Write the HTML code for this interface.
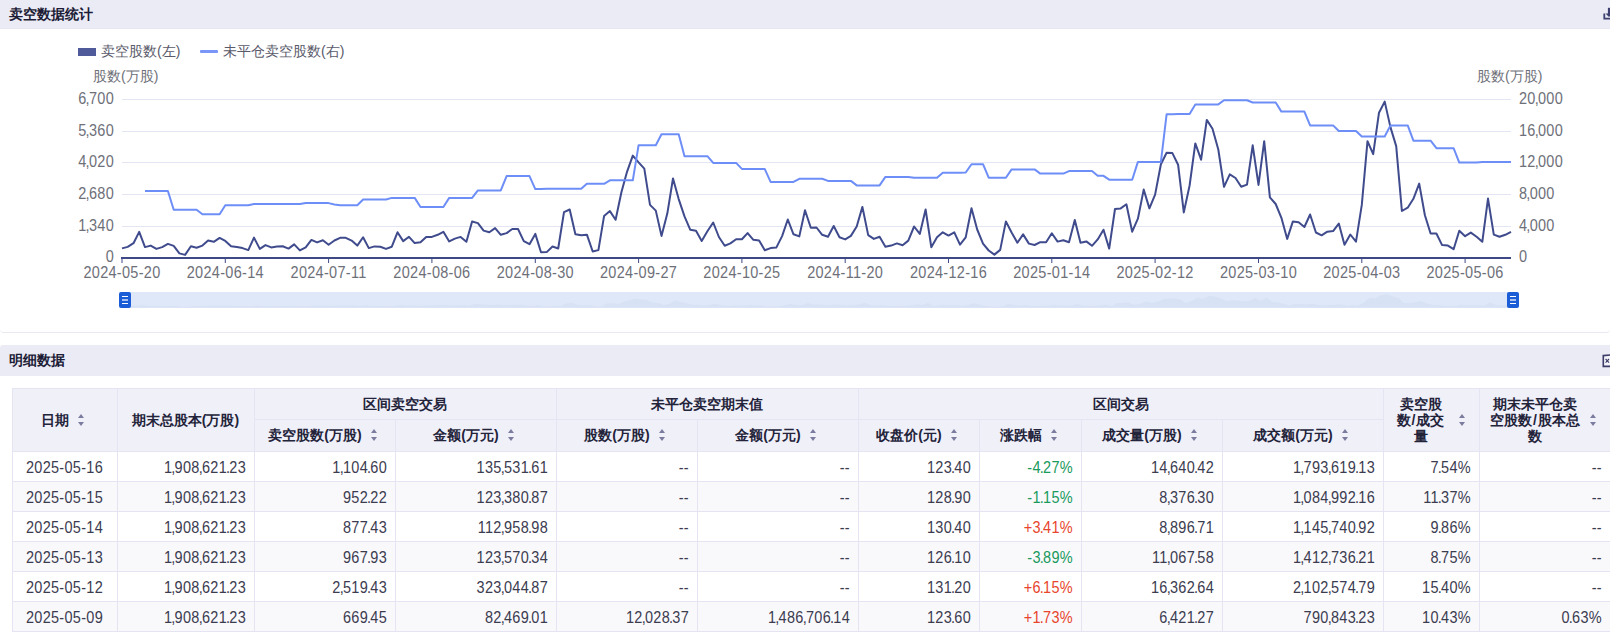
<!DOCTYPE html>
<html><head><meta charset="utf-8">
<style>
*{margin:0;padding:0;box-sizing:border-box}
html,body{width:1610px;height:632px;overflow:hidden;background:#fff;font-family:"Liberation Sans",sans-serif}
i{font-style:normal;margin:0 -1.05px}
.hdr{position:absolute;left:0;width:1610px;background:#ebebf5;color:#1c1c36;font-size:14px;font-weight:bold}
.hdr span{position:absolute;left:9px}
#h1{top:0;height:29px;border-bottom:1px solid #e7e7f3}
#h1 span{top:6px}
#h2{top:345px;height:31px;border-radius:3px 0 0 0}
#h2 span{top:7px}
#chartbox{position:absolute;left:0;top:29px;width:1610px;height:304px;border-bottom:1px solid #e8e8f2;border-radius:0 0 4px 4px}
.chart{position:absolute;left:0;top:29px}
.lg{position:absolute;font-size:14px;color:#5a5a6a;top:43px}
.xl{position:absolute;top:264px;width:100px;text-align:center;font-size:14.5px;letter-spacing:0.3px;transform:scaleY(1.1);color:#6e7079}
.yl{position:absolute;left:14px;width:100px;text-align:right;font-size:14.5px;letter-spacing:0.3px;transform:scaleY(1.1);color:#6e7079}
.yr{position:absolute;left:1519px;width:100px;text-align:left;font-size:14.5px;letter-spacing:0.3px;transform:scaleY(1.1);color:#6e7079}
.axt{position:absolute;top:68px;font-size:14px;color:#6e7079}
.hl{position:absolute;left:12px;width:1598px;height:1px;background:#e4e4f2}
.vl{position:absolute;width:1px;background:#e4e4f2}
.hc{position:absolute;display:flex;align-items:center;justify-content:center;font-size:14px;font-weight:bold;color:#23233a;line-height:16px;text-align:center}
.ml{display:inline-block;word-break:break-all}
u{text-decoration:none;margin:0 1px}
.ml+.so{margin-left:12px}
.so{display:inline-block;position:relative;width:7px;height:12px;margin-left:9px;margin-right:3px}
.so:before{content:"";position:absolute;left:0;top:0;border-left:3.5px solid transparent;border-right:3.5px solid transparent;border-bottom:4px solid #7b7b9f}
.so:after{content:"";position:absolute;left:0;top:8px;border-left:3.5px solid transparent;border-right:3.5px solid transparent;border-top:4px solid #7b7b9f}
.dc{position:absolute;height:30px;display:flex;align-items:center;justify-content:flex-end;padding:1px 8px 0;font-size:14.5px;letter-spacing:0.3px;transform:scaleY(1.1);color:#3c3c50;white-space:nowrap}
.dz{position:absolute;top:292px;height:16px}
.hb{position:absolute;left:3px;width:6px;height:1px;background:#fff}
</style></head><body>
<div id="h1" class="hdr"><span>卖空数据统计</span></div>
<svg style="position:absolute;left:1598px;top:4px" width="12" height="20" viewBox="0 0 12 20"><path d="M6.3 9.5 V14.6 H14" fill="none" stroke="#3d4070" stroke-width="1.8"/><path d="M11 3.8 V12" stroke="#3d4070" stroke-width="2.2"/><path d="M7.5 9.5 L11 13 L14.5 9.5 Z" fill="#3d4070"/></svg>
<div id="chartbox"></div>
<svg class="chart" width="1610" height="303" viewBox="0 29 1610 303">
<line x1="122" x2="1511" y1="99.5" y2="99.5" stroke="#e3e5f2" stroke-width="1"/>
<line x1="122" x2="1511" y1="131.5" y2="131.5" stroke="#e3e5f2" stroke-width="1"/>
<line x1="122" x2="1511" y1="162.5" y2="162.5" stroke="#e3e5f2" stroke-width="1"/>
<line x1="122" x2="1511" y1="194.5" y2="194.5" stroke="#e3e5f2" stroke-width="1"/>
<line x1="122" x2="1511" y1="226.5" y2="226.5" stroke="#e3e5f2" stroke-width="1"/>
<line x1="121" x2="1511" y1="258" y2="258" stroke="#3e4a85" stroke-width="2"/>
<line x1="122.0" x2="122.0" y1="258" y2="263" stroke="#3e4a85" stroke-width="1"/>
<line x1="225.3" x2="225.3" y1="258" y2="263" stroke="#3e4a85" stroke-width="1"/>
<line x1="328.6" x2="328.6" y1="258" y2="263" stroke="#3e4a85" stroke-width="1"/>
<line x1="431.9" x2="431.9" y1="258" y2="263" stroke="#3e4a85" stroke-width="1"/>
<line x1="535.3" x2="535.3" y1="258" y2="263" stroke="#3e4a85" stroke-width="1"/>
<line x1="638.6" x2="638.6" y1="258" y2="263" stroke="#3e4a85" stroke-width="1"/>
<line x1="741.9" x2="741.9" y1="258" y2="263" stroke="#3e4a85" stroke-width="1"/>
<line x1="845.2" x2="845.2" y1="258" y2="263" stroke="#3e4a85" stroke-width="1"/>
<line x1="948.5" x2="948.5" y1="258" y2="263" stroke="#3e4a85" stroke-width="1"/>
<line x1="1051.8" x2="1051.8" y1="258" y2="263" stroke="#3e4a85" stroke-width="1"/>
<line x1="1155.1" x2="1155.1" y1="258" y2="263" stroke="#3e4a85" stroke-width="1"/>
<line x1="1258.5" x2="1258.5" y1="258" y2="263" stroke="#3e4a85" stroke-width="1"/>
<line x1="1361.8" x2="1361.8" y1="258" y2="263" stroke="#3e4a85" stroke-width="1"/>
<line x1="1465.1" x2="1465.1" y1="258" y2="263" stroke="#3e4a85" stroke-width="1"/>
<path d="M122.0,248.4 L127.7,246.9 L133.5,243.2 L139.2,231.9 L145.0,247.1 L150.7,245.6 L156.4,248.9 L162.2,247.1 L167.9,243.9 L173.7,245.9 L179.4,253.4 L185.1,254.9 L190.9,246.3 L196.6,247.8 L202.4,245.6 L208.1,240.6 L213.8,241.8 L219.6,237.9 L225.3,240.9 L231.1,246.3 L236.8,246.9 L242.5,248.1 L248.3,250.1 L254.0,237.6 L259.8,248.9 L265.5,245.1 L271.2,247.4 L277.0,246.6 L282.7,246.3 L288.5,248.6 L294.2,244.4 L299.9,250.4 L305.7,247.4 L311.4,239.9 L317.1,242.4 L322.9,240.3 L328.6,244.7 L334.4,240.5 L340.1,237.8 L345.8,237.8 L351.6,240.6 L357.3,245.6 L363.1,237.3 L368.8,248.1 L374.5,246.4 L380.3,246.7 L386.0,248.9 L391.8,246.7 L397.5,232.3 L403.2,241.1 L409.0,236.8 L414.7,243.1 L420.5,242.3 L426.2,236.9 L431.9,236.9 L437.7,234.8 L443.4,231.8 L449.2,241.4 L454.9,238.6 L460.6,236.9 L466.4,241.8 L472.1,221.5 L477.9,223.1 L483.6,230.6 L489.3,232.3 L495.1,228.1 L500.8,234.8 L506.6,233.1 L512.3,229.0 L518.0,229.0 L523.8,241.1 L529.5,244.2 L535.3,233.9 L541.0,252.2 L546.7,252.1 L552.5,246.5 L558.2,248.5 L564.0,212.2 L569.7,209.5 L575.4,234.2 L581.2,235.2 L586.9,234.7 L592.7,251.5 L598.4,250.1 L604.1,215.9 L609.9,211.1 L615.6,219.8 L621.4,192.3 L627.1,171.6 L632.8,155.6 L638.6,162.4 L644.3,168.6 L650.0,204.9 L655.8,210.6 L661.5,235.9 L667.3,213.6 L673.0,178.5 L678.7,199.1 L684.5,216.4 L690.2,229.7 L696.0,230.8 L701.7,240.9 L707.4,231.3 L713.2,222.5 L718.9,237.0 L724.7,245.7 L730.4,243.4 L736.1,239.3 L741.9,239.3 L747.6,233.1 L753.4,239.8 L759.1,240.5 L764.8,250.2 L770.6,248.1 L776.3,247.6 L782.1,236.1 L787.8,219.5 L793.5,234.3 L799.3,236.4 L805.0,210.2 L810.8,227.8 L816.5,227.5 L822.2,234.8 L828.0,236.8 L833.7,226.0 L839.5,237.3 L845.2,239.4 L850.9,235.9 L856.7,226.5 L862.4,206.9 L868.2,235.1 L873.9,238.9 L879.6,236.8 L885.4,246.7 L891.1,245.6 L896.9,243.4 L902.6,245.2 L908.3,240.6 L914.1,226.5 L919.8,233.9 L925.6,209.5 L931.3,247.2 L937.0,237.3 L942.8,232.3 L948.5,235.6 L954.3,232.3 L960.0,244.7 L965.7,237.4 L971.5,208.3 L977.2,229.5 L983.0,243.6 L988.7,250.5 L994.4,254.6 L1000.2,249.9 L1005.9,221.4 L1011.6,232.5 L1017.4,242.7 L1023.1,234.4 L1028.9,243.6 L1034.6,245.0 L1040.3,242.2 L1046.1,242.2 L1051.8,233.3 L1057.6,241.6 L1063.3,240.2 L1069.0,242.2 L1074.8,220.0 L1080.5,242.7 L1086.3,241.4 L1092.0,245.8 L1097.7,239.4 L1103.5,229.7 L1109.2,248.6 L1115.0,209.0 L1120.7,208.4 L1126.4,204.3 L1132.2,231.7 L1137.9,218.7 L1143.7,189.6 L1149.4,208.4 L1155.1,194.6 L1160.9,164.2 L1166.6,152.8 L1172.4,153.1 L1178.1,164.7 L1183.8,212.4 L1189.6,185.5 L1195.3,143.4 L1201.1,159.7 L1206.8,119.9 L1212.5,128.7 L1218.3,149.5 L1224.0,186.8 L1229.8,174.4 L1235.5,178.0 L1241.2,186.8 L1247.0,184.6 L1252.7,145.3 L1258.5,184.9 L1264.2,141.2 L1269.9,197.4 L1275.7,204.0 L1281.4,217.8 L1287.2,238.9 L1292.9,221.4 L1298.6,222.3 L1304.4,227.0 L1310.1,214.5 L1315.9,232.5 L1321.6,235.3 L1327.3,231.7 L1333.1,231.1 L1338.8,223.6 L1344.5,244.7 L1350.3,234.5 L1356.0,241.7 L1361.8,204.9 L1367.5,141.2 L1373.2,154.2 L1379.0,112.7 L1384.7,101.6 L1390.5,127.4 L1396.2,146.1 L1401.9,211.0 L1407.7,207.7 L1413.4,198.8 L1419.2,183.6 L1424.9,215.2 L1430.6,233.5 L1436.4,233.5 L1442.1,245.1 L1447.9,245.6 L1453.6,249.2 L1459.3,230.7 L1465.1,236.2 L1470.8,232.6 L1476.6,236.8 L1482.3,241.8 L1488.0,198.6 L1493.8,234.6 L1499.5,236.8 L1505.3,234.8 L1511.0,231.8" fill="none" stroke="#3f4b8c" stroke-width="2" stroke-linejoin="round"/>
<path d="M145.0,191.0 L150.7,191.0 L156.4,191.0 L162.2,191.0 L167.9,191.0 L173.7,209.8 L179.4,209.8 L185.1,209.8 L190.9,209.8 L196.6,209.8 L202.4,214.3 L208.1,214.3 L213.8,214.3 L219.6,214.3 L225.3,205.3 L231.1,205.3 L236.8,205.3 L242.5,205.3 L248.3,205.3 L254.0,204.1 L259.8,204.1 L265.5,204.1 L271.2,204.1 L277.0,204.1 L282.7,204.1 L288.5,204.1 L294.2,204.1 L299.9,204.1 L305.7,203.1 L311.4,203.1 L317.1,203.1 L322.9,203.1 L328.6,203.1 L334.4,204.5 L340.1,205.2 L345.8,205.2 L351.6,205.2 L357.3,205.2 L363.1,199.5 L368.8,199.5 L374.5,199.5 L380.3,199.5 L386.0,199.5 L391.8,197.9 L397.5,197.9 L403.2,197.9 L409.0,197.9 L414.7,197.9 L420.5,207.0 L426.2,207.0 L431.9,207.0 L437.7,207.0 L443.4,207.0 L449.2,197.9 L454.9,197.9 L460.6,197.9 L466.4,197.9 L472.1,197.9 L477.9,190.4 L483.6,190.4 L489.3,190.4 L495.1,190.4 L500.8,190.4 L506.6,176.1 L512.3,176.1 L518.0,176.1 L523.8,176.1 L529.5,176.1 L535.3,189.1 L541.0,189.1 L546.7,188.8 L552.5,188.8 L558.2,188.8 L564.0,188.8 L569.7,188.8 L575.4,188.8 L581.2,188.8 L586.9,183.8 L592.7,183.8 L598.4,183.8 L604.1,183.8 L609.9,180.3 L615.6,180.3 L621.4,180.3 L627.1,180.3 L632.8,180.3 L638.6,145.2 L644.3,145.2 L650.0,145.2 L655.8,145.2 L661.5,134.2 L667.3,134.2 L673.0,134.2 L678.7,134.2 L684.5,156.2 L690.2,156.2 L696.0,156.2 L701.7,156.2 L707.4,156.2 L713.2,162.9 L718.9,162.9 L724.7,162.9 L730.4,162.9 L736.1,162.9 L741.9,168.9 L747.6,168.9 L753.4,168.9 L759.1,169.1 L764.8,169.1 L770.6,181.9 L776.3,181.9 L782.1,181.9 L787.8,181.9 L793.5,181.9 L799.3,178.8 L805.0,178.8 L810.8,178.8 L816.5,178.8 L822.2,178.8 L828.0,180.9 L833.7,180.9 L839.5,180.9 L845.2,180.9 L850.9,180.9 L856.7,185.4 L862.4,185.4 L868.2,185.4 L873.9,185.4 L879.6,185.4 L885.4,176.9 L891.1,176.9 L896.9,176.9 L902.6,176.9 L908.3,176.9 L914.1,177.8 L919.8,177.8 L925.6,177.8 L931.3,177.8 L937.0,177.8 L942.8,172.8 L948.5,172.8 L954.3,172.8 L960.0,172.8 L965.7,172.5 L971.5,164.2 L977.2,164.2 L983.0,164.2 L988.7,177.7 L994.4,177.7 L1000.2,177.7 L1005.9,177.7 L1011.6,169.4 L1017.4,169.4 L1023.1,169.4 L1028.9,169.4 L1034.6,169.4 L1040.3,173.6 L1046.1,173.6 L1051.8,173.6 L1057.6,173.6 L1063.3,173.6 L1069.0,171.1 L1074.8,171.1 L1080.5,171.1 L1086.3,171.1 L1092.0,171.1 L1097.7,175.8 L1103.5,175.8 L1109.2,179.7 L1115.0,179.7 L1120.7,179.7 L1126.4,179.7 L1132.2,179.7 L1137.9,161.9 L1143.7,161.9 L1149.4,161.9 L1155.1,161.9 L1160.9,161.9 L1166.6,114.3 L1172.4,114.3 L1178.1,114.1 L1183.8,114.1 L1189.6,114.1 L1195.3,104.4 L1201.1,104.4 L1206.8,104.4 L1212.5,104.4 L1218.3,104.4 L1224.0,100.2 L1229.8,100.2 L1235.5,100.2 L1241.2,100.2 L1247.0,100.2 L1252.7,102.5 L1258.5,102.5 L1264.2,102.5 L1269.9,102.5 L1275.7,102.5 L1281.4,111.6 L1287.2,111.6 L1292.9,111.6 L1298.6,111.6 L1304.4,111.6 L1310.1,125.4 L1315.9,125.4 L1321.6,125.4 L1327.3,125.4 L1333.1,125.4 L1338.8,131.0 L1344.5,131.0 L1350.3,131.0 L1356.0,131.0 L1361.8,136.5 L1367.5,136.5 L1373.2,136.5 L1379.0,136.5 L1384.7,136.5 L1390.5,125.4 L1396.2,125.4 L1401.9,125.4 L1407.7,125.4 L1413.4,140.7 L1419.2,140.7 L1424.9,140.7 L1430.6,140.7 L1436.4,148.2 L1442.1,148.2 L1447.9,148.2 L1453.6,148.2 L1459.3,162.6 L1465.1,162.6 L1470.8,162.6 L1476.6,162.6 L1482.3,162.0 L1488.0,162.0 L1493.8,162.0 L1499.5,162.0 L1505.3,162.0 L1511.0,162.0" fill="none" stroke="#6e8ef7" stroke-width="2" stroke-linejoin="round"/>
<rect x="130" y="292" width="1378" height="16" fill="#dfe8f8"/>
<polygon points="125,307.5 125.0,306.3 130.7,306.1 136.5,305.8 142.2,304.9 148.0,306.1 153.7,306.0 159.4,306.3 165.2,306.1 170.9,305.9 176.7,306.0 182.4,306.7 188.1,306.8 193.9,306.1 199.5,306.2 205.3,306.0 211.0,305.6 216.7,305.7 222.5,305.4 228.2,305.6 234.0,306.1 239.7,306.1 245.4,306.2 251.2,306.4 256.9,305.4 262.7,306.3 268.4,306.0 274.1,306.2 279.9,306.1 285.6,306.1 291.4,306.3 297.1,305.9 302.8,306.4 308.6,306.2 314.3,305.6 320.0,305.8 325.8,305.6 331.5,305.9 337.2,305.6 342.9,305.4 348.6,305.4 354.4,305.6 360.1,306.0 365.9,305.3 371.6,306.2 377.3,306.1 383.1,306.1 388.8,306.3 394.6,306.1 400.3,304.9 406.0,305.7 411.8,305.3 417.5,305.8 423.3,305.7 429.0,305.3 434.7,305.3 440.5,305.1 446.2,304.9 452.0,305.7 457.7,305.4 463.4,305.3 469.2,305.7 474.8,304.0 480.6,304.2 486.3,304.8 492.0,304.9 497.8,304.6 503.5,305.1 509.3,305.0 515.0,304.7 520.7,304.7 526.5,305.7 532.2,305.9 538.0,305.1 543.7,306.6 549.4,306.6 555.2,306.1 560.9,306.3 566.7,303.3 572.4,303.1 578.1,305.1 583.9,305.2 589.6,305.1 595.4,306.5 601.1,306.4 606.8,303.6 612.5,303.2 618.2,303.9 624.0,301.6 629.7,299.9 635.4,298.6 641.2,299.2 646.9,299.7 652.6,302.7 658.4,303.1 664.1,305.2 669.9,303.4 675.6,300.5 681.3,302.2 687.1,303.6 692.8,304.7 698.6,304.8 704.3,305.6 710.0,304.8 715.8,304.1 721.5,305.3 727.3,306.0 733.0,305.8 738.7,305.5 744.5,305.5 750.1,305.0 755.9,305.5 761.6,305.6 767.3,306.4 773.1,306.2 778.8,306.2 784.6,305.2 790.3,303.9 796.0,305.1 801.8,305.3 807.5,303.1 813.3,304.6 819.0,304.5 824.7,305.1 830.5,305.3 836.2,304.4 842.0,305.3 847.7,305.5 853.4,305.2 859.2,304.4 864.9,302.8 870.7,305.2 876.4,305.5 882.1,305.3 887.9,306.1 893.5,306.0 899.3,305.8 905.0,306.0 910.7,305.6 916.5,304.4 922.2,305.1 928.0,303.1 933.7,306.2 939.4,305.3 945.2,304.9 950.9,305.2 956.7,304.9 962.4,305.9 968.1,305.3 973.9,303.0 979.6,304.7 985.4,305.9 991.1,306.4 996.8,306.8 1002.6,306.4 1008.3,304.0 1014.0,304.9 1019.8,305.8 1025.5,305.1 1031.2,305.9 1036.9,306.0 1042.6,305.7 1048.4,305.7 1054.1,305.0 1059.9,305.7 1065.6,305.6 1071.3,305.7 1077.1,303.9 1082.8,305.8 1088.6,305.7 1094.3,306.0 1100.0,305.5 1105.8,304.7 1111.5,306.3 1117.3,303.0 1123.0,303.0 1128.7,302.6 1134.5,304.9 1140.2,303.8 1146.0,301.4 1151.7,303.0 1157.4,301.8 1163.2,299.3 1168.8,298.4 1174.6,298.4 1180.3,299.4 1186.0,303.3 1191.8,301.1 1197.5,297.6 1203.3,299.0 1209.0,295.7 1214.7,296.4 1220.5,298.1 1226.2,301.2 1232.0,300.2 1237.7,300.5 1243.4,301.2 1249.2,301.0 1254.9,297.8 1260.7,301.0 1266.4,297.4 1272.1,302.1 1277.9,302.6 1283.6,303.7 1289.4,305.5 1295.1,304.0 1300.8,304.1 1306.5,304.5 1312.2,303.5 1318.0,304.9 1323.7,305.2 1329.4,304.9 1335.2,304.8 1340.9,304.2 1346.6,305.9 1352.4,305.1 1358.1,305.7 1363.9,302.7 1369.6,297.4 1375.3,298.5 1381.1,295.1 1386.8,294.2 1392.6,296.3 1398.3,297.8 1404.0,303.2 1409.8,302.9 1415.5,302.2 1421.3,300.9 1427.0,303.5 1432.7,305.0 1438.5,305.0 1444.1,306.0 1449.9,306.0 1455.6,306.3 1461.3,304.8 1467.1,305.2 1472.8,305.0 1478.6,305.3 1484.3,305.7 1490.0,302.2 1495.8,305.1 1501.5,305.3 1507.3,305.1 1513.0,304.9 1513,307.5" fill="#d7e2f5"/>
</svg>
<div class="lg" style="left:78px"><b style="position:absolute;left:0;top:5px;width:18px;height:8px;background:#4e5a9a"></b><span style="position:absolute;left:23px;white-space:nowrap">卖空股数(左)</span></div>
<div class="lg" style="left:200px"><b style="position:absolute;left:0;top:7px;width:18px;height:3px;background:#7a96f8;border-radius:1px"></b><span style="position:absolute;left:23px;white-space:nowrap">未平仓卖空股数(右)</span></div>
<div class="axt" style="left:93px">股数(万股)</div>
<div class="axt" style="left:1477px">股数(万股)</div>
<div class="xl" style="left:72.0px">2024-05-20</div>
<div class="xl" style="left:175.3px">2024-06-14</div>
<div class="xl" style="left:278.6px">2024-07-11</div>
<div class="xl" style="left:381.9px">2024-08-06</div>
<div class="xl" style="left:485.3px">2024-08-30</div>
<div class="xl" style="left:588.6px">2024-09-27</div>
<div class="xl" style="left:691.9px">2024-10-25</div>
<div class="xl" style="left:795.2px">2024-11-20</div>
<div class="xl" style="left:898.5px">2024-12-16</div>
<div class="xl" style="left:1001.8px">2025-01-14</div>
<div class="xl" style="left:1105.1px">2025-02-12</div>
<div class="xl" style="left:1208.5px">2025-03-10</div>
<div class="xl" style="left:1311.8px">2025-04-03</div>
<div class="xl" style="left:1415.1px">2025-05-06</div>
<div class="yl" style="top:90.5px">6<i>,</i>700</div>
<div class="yl" style="top:122.5px">5<i>,</i>360</div>
<div class="yl" style="top:153.5px">4<i>,</i>020</div>
<div class="yl" style="top:185.5px">2<i>,</i>680</div>
<div class="yl" style="top:217.5px">1<i>,</i>340</div>
<div class="yl" style="top:248.5px">0</div>
<div class="yr" style="top:90.5px">20<i>,</i>000</div>
<div class="yr" style="top:122.5px">16<i>,</i>000</div>
<div class="yr" style="top:153.5px">12<i>,</i>000</div>
<div class="yr" style="top:185.5px">8<i>,</i>000</div>
<div class="yr" style="top:217.5px">4<i>,</i>000</div>
<div class="yr" style="top:248.5px">0</div>
<div class="dz" style="left:119px;width:12px;background:#1b5cd7;border-radius:2px"><b class="hb" style="top:4px"></b><b class="hb" style="top:7px;height:2px;background:#a8c0ef"></b><b class="hb" style="top:11px"></b></div>
<div class="dz" style="left:1507px;width:12px;background:#1b5cd7;border-radius:2px"><b class="hb" style="top:4px"></b><b class="hb" style="top:7px;height:2px;background:#a8c0ef"></b><b class="hb" style="top:11px"></b></div>
<div id="h2" class="hdr"><span>明细数据</span></div>
<svg style="position:absolute;left:1598px;top:350px" width="12" height="20" viewBox="0 0 12 20"><path d="M5.3 5.6 L14 4.8 V16.4 L5.3 16.4 Z" fill="#f4f4fa" stroke="#3b3b68" stroke-width="1.6"/><path d="M7.6 9 L11 12.6 M11 9 L7.6 12.6" stroke="#3b3b68" stroke-width="1.1"/></svg>
<div style="position:absolute;left:12px;top:388px;width:1598px;height:63px;background:#f0f0f9"></div>
<div style="position:absolute;left:12px;top:451px;width:1598px;height:30px;background:#ffffff"></div>
<div style="position:absolute;left:12px;top:481px;width:1598px;height:30px;background:#f9f9fc"></div>
<div style="position:absolute;left:12px;top:511px;width:1598px;height:30px;background:#ffffff"></div>
<div style="position:absolute;left:12px;top:541px;width:1598px;height:30px;background:#f9f9fc"></div>
<div style="position:absolute;left:12px;top:571px;width:1598px;height:30px;background:#ffffff"></div>
<div style="position:absolute;left:12px;top:601px;width:1598px;height:30px;background:#f9f9fc"></div>
<div class="hl" style="top:388px"></div>
<div class="hl" style="top:451px"></div>
<div class="hl" style="top:481px"></div>
<div class="hl" style="top:511px"></div>
<div class="hl" style="top:541px"></div>
<div class="hl" style="top:571px"></div>
<div class="hl" style="top:601px"></div>
<div class="hl" style="top:631px"></div>
<div class="hl" style="top:419px;left:254px;width:1129px"></div>
<div class="vl" style="left:12px;top:388px;height:243px"></div>
<div class="vl" style="left:117px;top:388px;height:243px"></div>
<div class="vl" style="left:254px;top:388px;height:243px"></div>
<div class="vl" style="left:395px;top:419px;height:212px"></div>
<div class="vl" style="left:556px;top:388px;height:243px"></div>
<div class="vl" style="left:697px;top:419px;height:212px"></div>
<div class="vl" style="left:858px;top:388px;height:243px"></div>
<div class="vl" style="left:979px;top:419px;height:212px"></div>
<div class="vl" style="left:1081px;top:419px;height:212px"></div>
<div class="vl" style="left:1222px;top:419px;height:212px"></div>
<div class="vl" style="left:1383px;top:388px;height:243px"></div>
<div class="vl" style="left:1479px;top:388px;height:243px"></div>
<div class="hc" style="left:12px;top:388px;width:105px;height:63px;"><span>日期</span><s class="so"></s></div>
<div class="hc" style="left:117px;top:388px;width:137px;height:63px;"><span>期末总股本(万股)</span></div>
<div class="hc" style="left:254px;top:388px;width:302px;height:31px;"><span>区间卖空交易</span></div>
<div class="hc" style="left:556px;top:388px;width:302px;height:31px;"><span>未平仓卖空期末值</span></div>
<div class="hc" style="left:858px;top:388px;width:525px;height:31px;"><span>区间交易</span></div>
<div class="hc" style="left:254px;top:419px;width:141px;height:32px;"><span>卖空股数(万股)</span><s class="so"></s></div>
<div class="hc" style="left:395px;top:419px;width:161px;height:32px;"><span>金额(万元)</span><s class="so"></s></div>
<div class="hc" style="left:556px;top:419px;width:141px;height:32px;"><span>股数(万股)</span><s class="so"></s></div>
<div class="hc" style="left:697px;top:419px;width:161px;height:32px;"><span>金额(万元)</span><s class="so"></s></div>
<div class="hc" style="left:858px;top:419px;width:121px;height:32px;"><span>收盘价(元)</span><s class="so"></s></div>
<div class="hc" style="left:979px;top:419px;width:102px;height:32px;"><span>涨跌幅</span><s class="so"></s></div>
<div class="hc" style="left:1081px;top:419px;width:141px;height:32px;"><span>成交量(万股)</span><s class="so"></s></div>
<div class="hc" style="left:1222px;top:419px;width:161px;height:32px;"><span>成交额(万元)</span><s class="so"></s></div>
<div class="hc" style="left:1383px;top:388px;width:96px;height:63px;"><span><span class="ml" style="width:49px">卖空股数<u>/</u>成交量</span></span><s class="so" style="margin-left:14px;margin-right:0"></s></div>
<div class="hc" style="left:1479px;top:388px;width:131px;height:63px;"><span><span class="ml" style="width:92px">期末未平仓卖空股数<u>/</u>股本总数</span></span><s class="so"></s></div>
<div class="dc" style="left:12px;top:451px;width:105px;justify-content:center">2025-05-16</div>
<div class="dc" style="left:117px;top:451px;width:137px;">1<i>,</i>908<i>,</i>621<i>.</i>23</div>
<div class="dc" style="left:254px;top:451px;width:141px;">1<i>,</i>104<i>.</i>60</div>
<div class="dc" style="left:395px;top:451px;width:161px;">135<i>,</i>531<i>.</i>61</div>
<div class="dc" style="left:556px;top:451px;width:141px;">--</div>
<div class="dc" style="left:697px;top:451px;width:161px;">--</div>
<div class="dc" style="left:858px;top:451px;width:121px;">123<i>.</i>40</div>
<div class="dc" style="left:979px;top:451px;width:102px;color:#1a9a5c">-4<i>.</i>27%</div>
<div class="dc" style="left:1081px;top:451px;width:141px;">14<i>,</i>640<i>.</i>42</div>
<div class="dc" style="left:1222px;top:451px;width:161px;">1<i>,</i>793<i>,</i>619<i>.</i>13</div>
<div class="dc" style="left:1383px;top:451px;width:96px;">7<i>.</i>54%</div>
<div class="dc" style="left:1479px;top:451px;width:131px;">--</div>
<div class="dc" style="left:12px;top:481px;width:105px;justify-content:center">2025-05-15</div>
<div class="dc" style="left:117px;top:481px;width:137px;">1<i>,</i>908<i>,</i>621<i>.</i>23</div>
<div class="dc" style="left:254px;top:481px;width:141px;">952<i>.</i>22</div>
<div class="dc" style="left:395px;top:481px;width:161px;">123<i>,</i>380<i>.</i>87</div>
<div class="dc" style="left:556px;top:481px;width:141px;">--</div>
<div class="dc" style="left:697px;top:481px;width:161px;">--</div>
<div class="dc" style="left:858px;top:481px;width:121px;">128<i>.</i>90</div>
<div class="dc" style="left:979px;top:481px;width:102px;color:#1a9a5c">-1<i>.</i>15%</div>
<div class="dc" style="left:1081px;top:481px;width:141px;">8<i>,</i>376<i>.</i>30</div>
<div class="dc" style="left:1222px;top:481px;width:161px;">1<i>,</i>084<i>,</i>992<i>.</i>16</div>
<div class="dc" style="left:1383px;top:481px;width:96px;">11<i>.</i>37%</div>
<div class="dc" style="left:1479px;top:481px;width:131px;">--</div>
<div class="dc" style="left:12px;top:511px;width:105px;justify-content:center">2025-05-14</div>
<div class="dc" style="left:117px;top:511px;width:137px;">1<i>,</i>908<i>,</i>621<i>.</i>23</div>
<div class="dc" style="left:254px;top:511px;width:141px;">877<i>.</i>43</div>
<div class="dc" style="left:395px;top:511px;width:161px;">112<i>,</i>958<i>.</i>98</div>
<div class="dc" style="left:556px;top:511px;width:141px;">--</div>
<div class="dc" style="left:697px;top:511px;width:161px;">--</div>
<div class="dc" style="left:858px;top:511px;width:121px;">130<i>.</i>40</div>
<div class="dc" style="left:979px;top:511px;width:102px;color:#e8452c">+3<i>.</i>41%</div>
<div class="dc" style="left:1081px;top:511px;width:141px;">8<i>,</i>896<i>.</i>71</div>
<div class="dc" style="left:1222px;top:511px;width:161px;">1<i>,</i>145<i>,</i>740<i>.</i>92</div>
<div class="dc" style="left:1383px;top:511px;width:96px;">9<i>.</i>86%</div>
<div class="dc" style="left:1479px;top:511px;width:131px;">--</div>
<div class="dc" style="left:12px;top:541px;width:105px;justify-content:center">2025-05-13</div>
<div class="dc" style="left:117px;top:541px;width:137px;">1<i>,</i>908<i>,</i>621<i>.</i>23</div>
<div class="dc" style="left:254px;top:541px;width:141px;">967<i>.</i>93</div>
<div class="dc" style="left:395px;top:541px;width:161px;">123<i>,</i>570<i>.</i>34</div>
<div class="dc" style="left:556px;top:541px;width:141px;">--</div>
<div class="dc" style="left:697px;top:541px;width:161px;">--</div>
<div class="dc" style="left:858px;top:541px;width:121px;">126<i>.</i>10</div>
<div class="dc" style="left:979px;top:541px;width:102px;color:#1a9a5c">-3<i>.</i>89%</div>
<div class="dc" style="left:1081px;top:541px;width:141px;">11<i>,</i>067<i>.</i>58</div>
<div class="dc" style="left:1222px;top:541px;width:161px;">1<i>,</i>412<i>,</i>736<i>.</i>21</div>
<div class="dc" style="left:1383px;top:541px;width:96px;">8<i>.</i>75%</div>
<div class="dc" style="left:1479px;top:541px;width:131px;">--</div>
<div class="dc" style="left:12px;top:571px;width:105px;justify-content:center">2025-05-12</div>
<div class="dc" style="left:117px;top:571px;width:137px;">1<i>,</i>908<i>,</i>621<i>.</i>23</div>
<div class="dc" style="left:254px;top:571px;width:141px;">2<i>,</i>519<i>.</i>43</div>
<div class="dc" style="left:395px;top:571px;width:161px;">323<i>,</i>044<i>.</i>87</div>
<div class="dc" style="left:556px;top:571px;width:141px;">--</div>
<div class="dc" style="left:697px;top:571px;width:161px;">--</div>
<div class="dc" style="left:858px;top:571px;width:121px;">131<i>.</i>20</div>
<div class="dc" style="left:979px;top:571px;width:102px;color:#e8452c">+6<i>.</i>15%</div>
<div class="dc" style="left:1081px;top:571px;width:141px;">16<i>,</i>362<i>.</i>64</div>
<div class="dc" style="left:1222px;top:571px;width:161px;">2<i>,</i>102<i>,</i>574<i>.</i>79</div>
<div class="dc" style="left:1383px;top:571px;width:96px;">15<i>.</i>40%</div>
<div class="dc" style="left:1479px;top:571px;width:131px;">--</div>
<div class="dc" style="left:12px;top:601px;width:105px;justify-content:center">2025-05-09</div>
<div class="dc" style="left:117px;top:601px;width:137px;">1<i>,</i>908<i>,</i>621<i>.</i>23</div>
<div class="dc" style="left:254px;top:601px;width:141px;">669<i>.</i>45</div>
<div class="dc" style="left:395px;top:601px;width:161px;">82<i>,</i>469<i>.</i>01</div>
<div class="dc" style="left:556px;top:601px;width:141px;">12<i>,</i>028<i>.</i>37</div>
<div class="dc" style="left:697px;top:601px;width:161px;">1<i>,</i>486<i>,</i>706<i>.</i>14</div>
<div class="dc" style="left:858px;top:601px;width:121px;">123<i>.</i>60</div>
<div class="dc" style="left:979px;top:601px;width:102px;color:#e8452c">+1<i>.</i>73%</div>
<div class="dc" style="left:1081px;top:601px;width:141px;">6<i>,</i>421<i>.</i>27</div>
<div class="dc" style="left:1222px;top:601px;width:161px;">790<i>,</i>843<i>.</i>23</div>
<div class="dc" style="left:1383px;top:601px;width:96px;">10<i>.</i>43%</div>
<div class="dc" style="left:1479px;top:601px;width:131px;">0<i>.</i>63%</div>
</body></html>
